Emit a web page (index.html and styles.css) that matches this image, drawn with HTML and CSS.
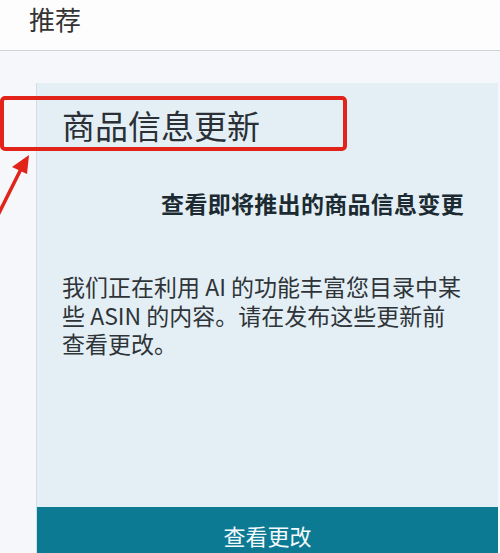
FILE: index.html
```html
<!DOCTYPE html>
<html lang="zh-CN">
<head>
<meta charset="utf-8">
<link rel="stylesheet" href="styles.css">
</head>
<body>
<div class="page">
  <header class="header">推荐</header>
  <main class="main">
    <section class="panel">
      <h1 class="panel-title">商品信息更新</h1>
      <h2 class="panel-subtitle">查看即将推出的商品信息变更</h2>
      <p class="panel-text"><span class="line">我们正在利用 AI 的功能丰富您目录中某</span><span class="line">些 ASIN 的内容。请在发布这些更新前</span><span class="line">查看更改。</span></p>
      <div class="panel-button">查看更改</div>
    </section>
  </main>
  <div class="highlight"></div>
  <svg class="arrow" width="40" height="70" viewBox="0 0 40 70">
    <line x1="-2" y1="64" x2="21" y2="18" stroke="#e2231a" stroke-width="3.5" stroke-linecap="round"/>
    <polygon points="29,4 12,16 27,23" fill="#e2231a"/>
  </svg>
</div>
</body>
</html>
```
FILE: styles.css
```css
html, body {
  margin: 0;
  padding: 0;
}
body {
  width: 500px;
  height: 553px;
  overflow: hidden;
  font-family: "Noto Sans CJK SC", "Noto Sans", sans-serif;
  color: #2b2f33;
  background: #f5f7fa;
}
.page {
  position: relative;
  width: 500px;
  height: 553px;
  overflow: hidden;
}
.header {
  height: 51px;
  box-sizing: border-box;
  padding-left: 29px;
  font-size: 26px;
  line-height: 37px;
  background: #fdfdfd;
  border-bottom: 1px solid #cfd3d7;
  color: #333;
}
.main {
  padding: 32px 2px 0 36px;
}
.panel {
  display: flex;
  flex-direction: column;
  height: 480px;
  background: #e4eff5;
  border-left: 1px solid #d2dde4;
}
.panel-title {
  margin: 22px 0 0 25px;
  font-size: 33px;
  font-weight: 400;
  line-height: 40px;
  color: #2a3035;
}
.panel-subtitle {
  margin: 43px 34px 0 0;
  text-align: right;
  font-size: 23px;
  font-weight: 700;
  line-height: 30px;
  letter-spacing: 0.3px;
  color: #1c2a32;
}
.panel-text {
  display: flex;
  flex-direction: column;
  margin: 54px 0 0 25px;
  font-size: 23px;
  color: #2f3438;
  white-space: nowrap;
}
.line {
  display: block;
  height: 28.5px;
  line-height: 28.5px;
}
.panel-button {
  margin-top: auto;
  height: 56px;
  background: #0d7a94;
  color: #f4fbfd;
  text-align: center;
  font-size: 22px;
  line-height: 56px;
}
.highlight {
  position: absolute;
  left: 0;
  top: 96px;
  width: 347px;
  height: 55px;
  box-sizing: border-box;
  border: 4px solid #e2231a;
  border-radius: 5px;
}
.arrow {
  position: absolute;
  left: 0;
  top: 151px;
}
```
